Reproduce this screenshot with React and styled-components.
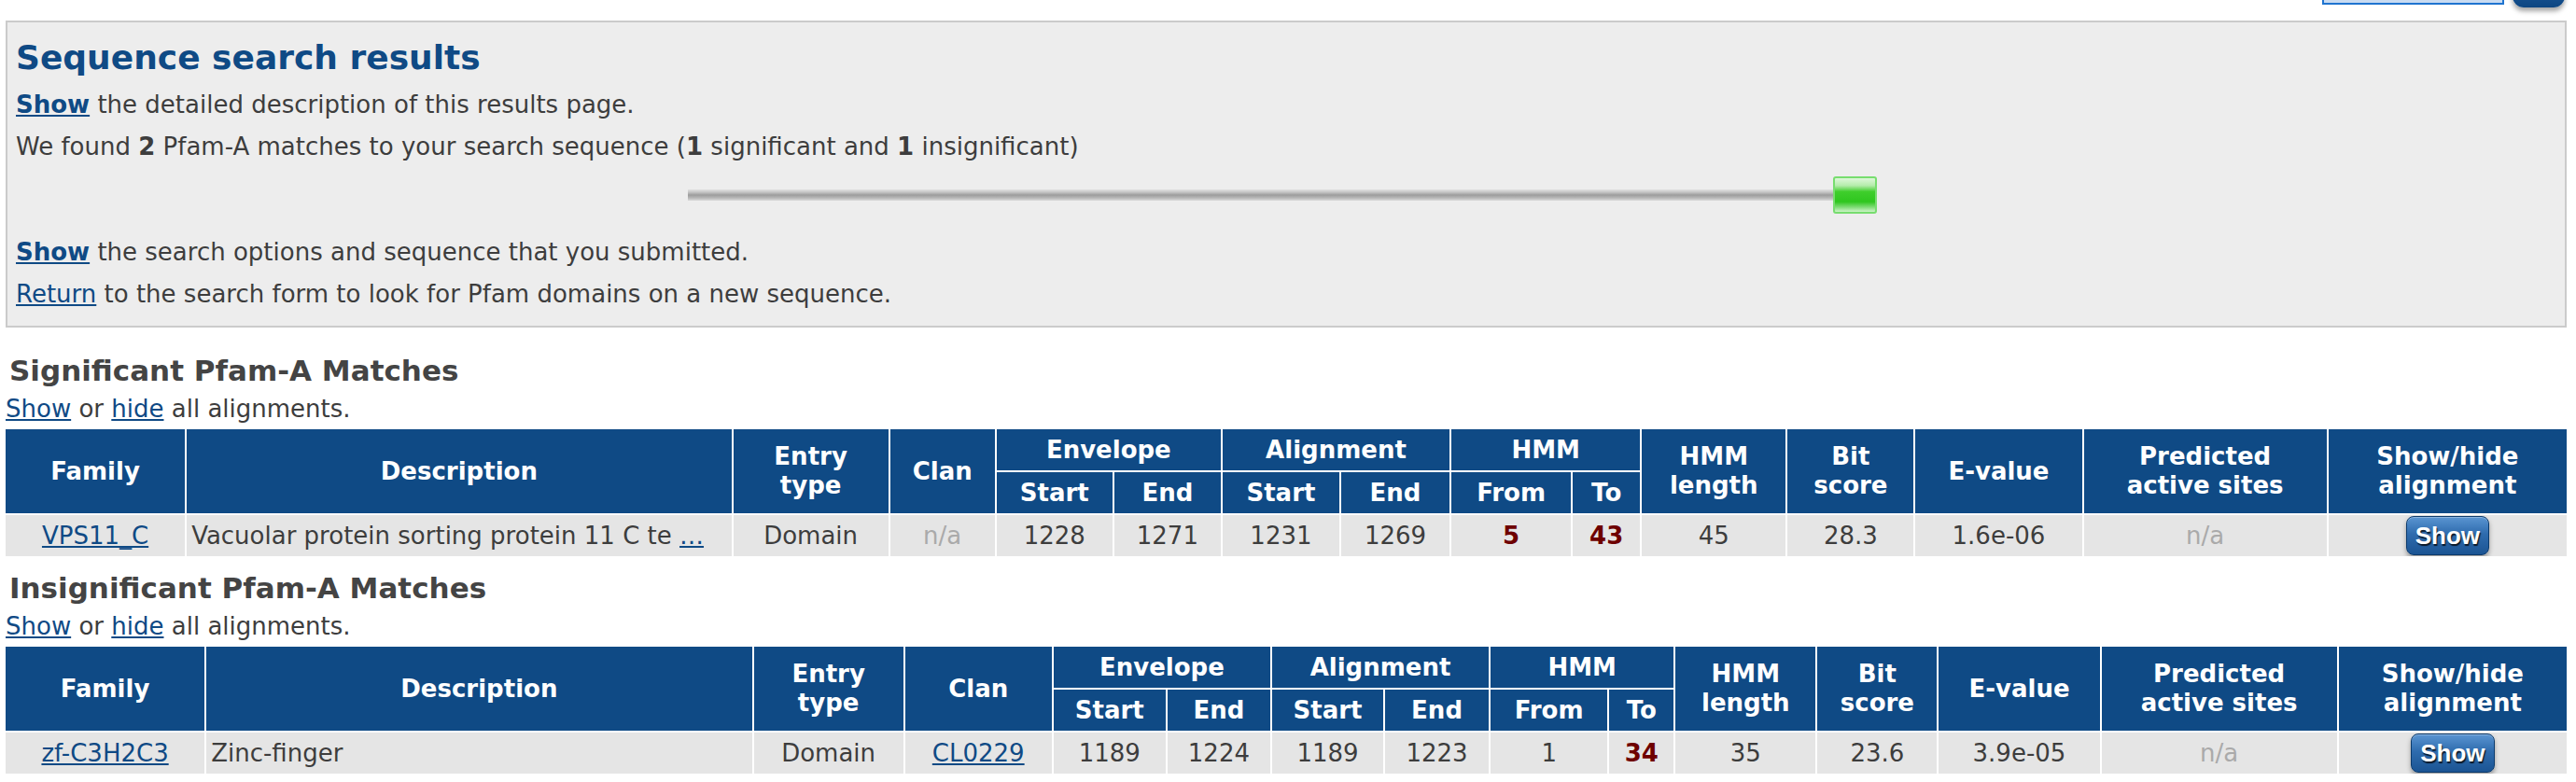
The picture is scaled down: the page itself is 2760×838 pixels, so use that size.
import React from "react";
import styled, { createGlobalStyle } from "styled-components";

const GlobalStyle = createGlobalStyle`
  html, body { margin: 0; padding: 0; background: #fff; }
  body {
    font-family: "DejaVu Sans", Verdana, "Liberation Sans", sans-serif;
    font-size: 26px;
    color: #3d3d3d;
  }
`;

const Page = styled.div`
  padding: 0 10px 24px 6px;
`;

const TopBar = styled.div`
  height: 8px;
  display: flex;
  justify-content: flex-end;
  align-items: flex-end;
  gap: 9px;
  padding-right: 2px;
  margin-bottom: 14px;
`;

const SearchField = styled.div`
  width: 191px;
  height: 36px;
  margin-bottom: 3px;
  border: 2px solid #1f74d0;
  background: #c9dbf1;
`;

const SearchButton = styled.div`
  width: 56px;
  height: 40px;
  border-radius: 0 0 12px 12px;
  background: linear-gradient(to bottom, #2a66a8, #0d4682);
  box-shadow: 0 4px 5px rgba(0, 0, 0, 0.35);
`;

const ResultsBox = styled.div`
  border: 2px solid #cbcbcb;
  background: #ededed;
  padding: 13px 17px 11px 9px;
`;

const Title = styled.h1`
  margin: 0 0 3px;
  font-size: 36px;
  line-height: 50px;
  font-weight: bold;
  color: #0f4a85;
`;

const Line = styled.p`
  margin: 0;
  line-height: 45px;
  white-space: nowrap;
`;

const Link = styled.a`
  color: #0f4a85;
  text-decoration: underline;
  font-weight: ${(p) => (p.$bold ? "bold" : "normal")};
  cursor: pointer;
`;

const Strong = styled.b`
  font-weight: bold;
`;

const SliderArea = styled.div`
  display: flex;
  justify-content: center;
  align-items: center;
  padding: 9px 0 19px;
`;

const Track = styled.div`
  width: 1227px;
  height: 12px;
  background: linear-gradient(
    to bottom,
    #e2e2e2 0%,
    #c4c4c4 25%,
    #9c9c9c 50%,
    #b6b6b6 75%,
    #dadada 100%
  );
`;

const Thumb = styled.div`
  box-sizing: border-box;
  width: 47px;
  height: 40px;
  border: 2px solid #77dd6f;
  border-radius: 3px;
  background: linear-gradient(
    to bottom,
    #dff7da 0%,
    #b4ecab 22%,
    #3fce2c 40%,
    #2fc61f 70%,
    #7fdc76 86%,
    #cdf4c8 100%
  );
`;

const SectionHeading = styled.h2`
  margin: ${(p) => p.$top}px 0 8px 4px;
  font-size: 31px;
  line-height: 36px;
  font-weight: bold;
  color: #444;
`;

const ToggleLine = styled.div`
  margin-left: 0;
  line-height: 30px;
  color: #3d3d3d;
`;

const Table = styled.table`
  border-collapse: separate;
  border-spacing: 2px;
  table-layout: fixed;
  width: calc(100% + 4px);
  margin: 5px -2px 0;
`;

const Col = styled.col`
  width: ${(p) => p.$w}px;
`;

const HeadRow = styled.tr`
  height: 44px;
`;

const Th = styled.th`
  background: #0f4a85;
  color: #fff;
  font-weight: bold;
  font-size: 26px;
  line-height: 31px;
  text-align: center;
  vertical-align: middle;
  padding: 0 4px;
`;

const BodyRow = styled.tr`
  height: 44px;
`;

const Td = styled.td`
  background: #e5e5e5;
  color: #3d3d3d;
  font-size: 26px;
  line-height: 31px;
  text-align: ${(p) => (p.$left ? "left" : "center")};
  padding: ${(p) => (p.$left ? "0 4px 0 5px" : "0 2px")};
  vertical-align: middle;
  white-space: nowrap;
  overflow: hidden;
`;

const NA = styled.span`
  color: #aaa;
`;

const HmmPos = styled.span`
  font-weight: ${(p) => (p.$out ? "bold" : "normal")};
  color: ${(p) => (p.$out ? "#6e0000" : "#3d3d3d")};
`;

const ShowButton = styled.button`
  font-family: "Liberation Sans", Arial, sans-serif;
  font-weight: bold;
  font-size: 26px;
  color: #fff;
  height: 42px;
  padding: 0 9px;
  border: 1px solid #0c3b6d;
  border-radius: 8px;
  background: linear-gradient(to bottom, #5a95d2 0%, #2f6cae 45%, #1b5493 100%);
  box-shadow: 0 3px 5px rgba(0, 0, 0, 0.35), inset 0 1px 0 rgba(255, 255, 255, 0.3);
  text-shadow: 1px 2px 1px rgba(0, 0, 0, 0.75);
  cursor: pointer;
  vertical-align: middle;
`;

const significant = {
  cols: [192, 583, 166, 112, 124, 114, 125, 116, 128, 72, 154, 135, 178, 260, 255],
  row: {
    family: "VPS11_C",
    desc: "Vacuolar protein sorting protein 11 C te",
    more: true,
    type: "Domain",
    clan: null,
    env: ["1228", "1271"],
    ali: ["1231", "1269"],
    hmm: [
      { v: "5", out: true },
      { v: "43", out: true },
    ],
    len: "45",
    bits: "28.3",
    evalue: "1.6e-06",
  },
};

const insignificant = {
  cols: [213, 584, 160, 157, 120, 110, 119, 111, 125, 69, 150, 128, 172, 252, 244],
  row: {
    family: "zf-C3H2C3",
    desc: "Zinc-finger",
    more: false,
    type: "Domain",
    clan: "CL0229",
    env: ["1189", "1224"],
    ali: ["1189", "1223"],
    hmm: [
      { v: "1", out: false },
      { v: "34", out: true },
    ],
    len: "35",
    bits: "23.6",
    evalue: "3.9e-05",
  },
};

function ResultsTable({ data }) {
  const r = data.row;
  return (
    <Table>
      <colgroup>
        {data.cols.map((w, i) => (
          <Col key={i} $w={w} />
        ))}
      </colgroup>
      <thead>
        <HeadRow>
          <Th rowSpan={2}>Family</Th>
          <Th rowSpan={2}>Description</Th>
          <Th rowSpan={2}>
            Entry
            <br />
            type
          </Th>
          <Th rowSpan={2}>Clan</Th>
          <Th colSpan={2}>Envelope</Th>
          <Th colSpan={2}>Alignment</Th>
          <Th colSpan={2}>HMM</Th>
          <Th rowSpan={2}>
            HMM
            <br />
            length
          </Th>
          <Th rowSpan={2}>
            Bit
            <br />
            score
          </Th>
          <Th rowSpan={2}>E-value</Th>
          <Th rowSpan={2}>
            Predicted
            <br />
            active sites
          </Th>
          <Th rowSpan={2}>
            Show/hide
            <br />
            alignment
          </Th>
        </HeadRow>
        <HeadRow>
          <Th>Start</Th>
          <Th>End</Th>
          <Th>Start</Th>
          <Th>End</Th>
          <Th>From</Th>
          <Th>To</Th>
        </HeadRow>
      </thead>
      <tbody>
        <BodyRow>
          <Td>
            <Link>{r.family}</Link>
          </Td>
          <Td $left>
            {r.desc}
            {r.more && (
              <>
                {" "}
                <Link>…</Link>
              </>
            )}
          </Td>
          <Td>{r.type}</Td>
          <Td>{r.clan ? <Link>{r.clan}</Link> : <NA>n/a</NA>}</Td>
          <Td>{r.env[0]}</Td>
          <Td>{r.env[1]}</Td>
          <Td>{r.ali[0]}</Td>
          <Td>{r.ali[1]}</Td>
          {r.hmm.map((h, i) => (
            <Td key={i}>
              <HmmPos $out={h.out}>{h.v}</HmmPos>
            </Td>
          ))}
          <Td>{r.len}</Td>
          <Td>{r.bits}</Td>
          <Td>{r.evalue}</Td>
          <Td>
            <NA>n/a</NA>
          </Td>
          <Td>
            <ShowButton>Show</ShowButton>
          </Td>
        </BodyRow>
      </tbody>
    </Table>
  );
}

export default function App() {
  return (
    <>
      <GlobalStyle />
      <Page>
        <TopBar>
          <SearchField />
          <SearchButton />
        </TopBar>
        <ResultsBox>
          <Title>Sequence search results</Title>
          <Line>
            <Link $bold>Show</Link> the detailed description of this results page.
          </Line>
          <Line>
            We found <Strong>2</Strong> Pfam-A matches to your search sequence (
            <Strong>1</Strong> significant and <Strong>1</Strong> insignificant)
          </Line>
          <SliderArea>
            <Track />
            <Thumb />
          </SliderArea>
          <Line>
            <Link $bold>Show</Link> the search options and sequence that you submitted.
          </Line>
          <Line>
            <Link>Return</Link> to the search form to look for Pfam domains on a new
            sequence.
          </Line>
        </ResultsBox>

        <SectionHeading $top={28}>Significant Pfam-A Matches</SectionHeading>
        <ToggleLine>
          <Link>Show</Link> or <Link>hide</Link> all alignments.
        </ToggleLine>
        <ResultsTable data={significant} />

        <SectionHeading $top={14}>Insignificant Pfam-A Matches</SectionHeading>
        <ToggleLine>
          <Link>Show</Link> or <Link>hide</Link> all alignments.
        </ToggleLine>
        <ResultsTable data={insignificant} />
      </Page>
    </>
  );
}
